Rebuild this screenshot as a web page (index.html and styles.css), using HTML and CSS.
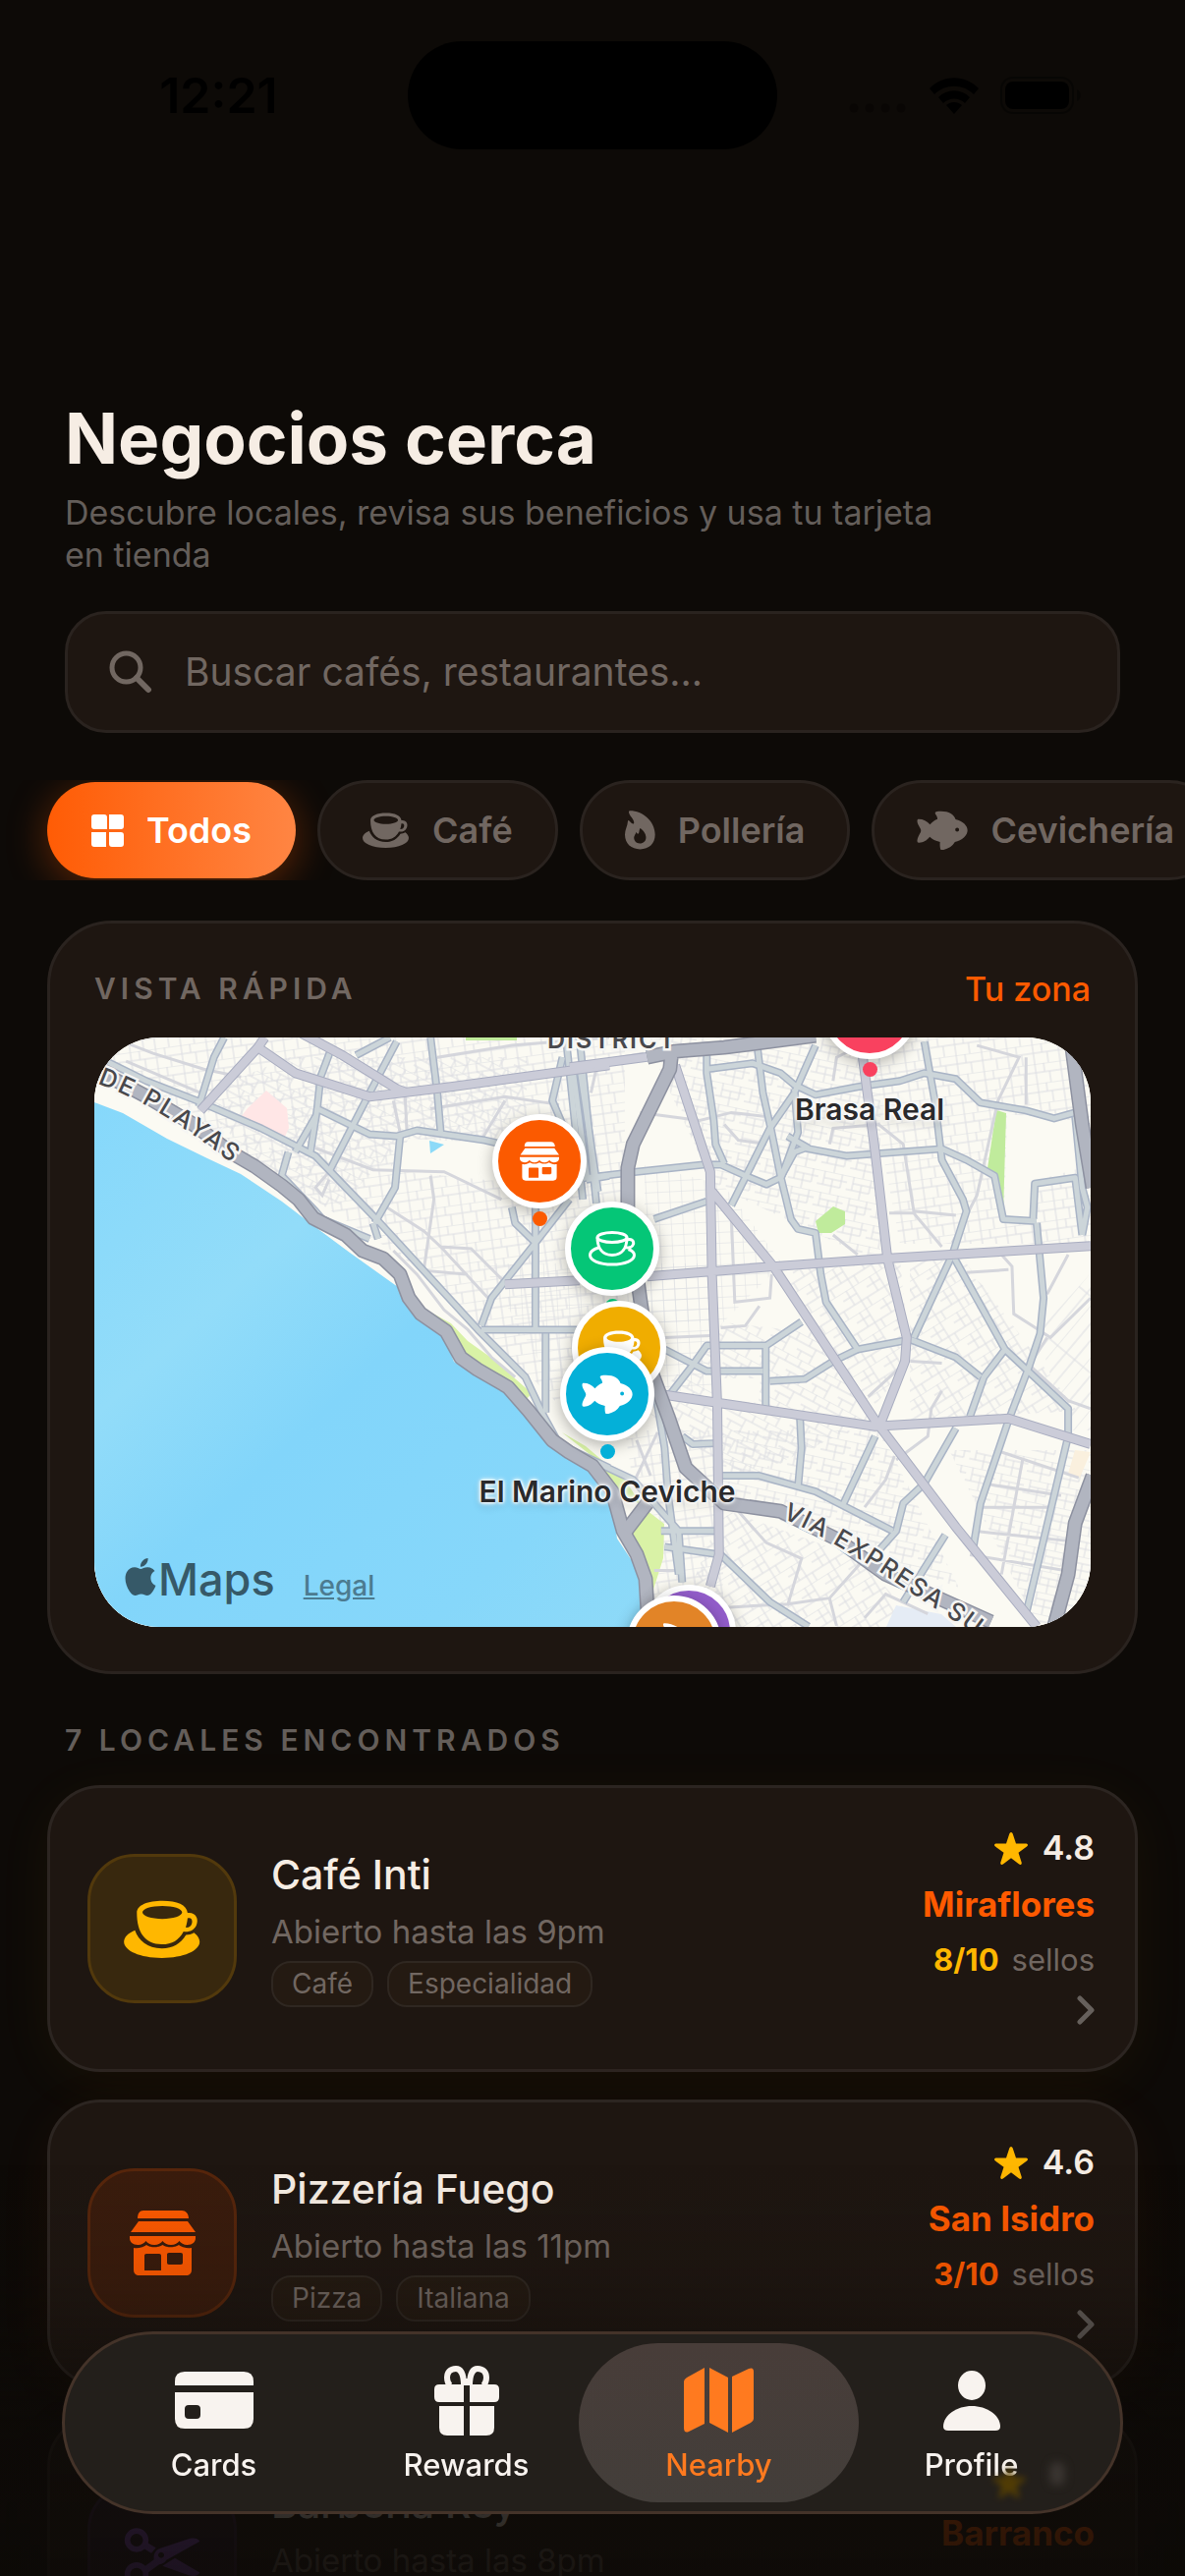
FILE: index.html
```html
<!DOCTYPE html>
<html lang="es">
<head>
    <meta charset="UTF-8">
    <meta name="viewport" content="width=device-width, initial-scale=1.0">
    <title>Negocios cerca</title>
    <link rel="stylesheet" href="styles.css">
</head>
<body>
    <!-- Icon sprite -->
    <svg class="sprite" aria-hidden="true">
        <symbol id="i-cup" viewBox="0 0 48 36">
            <path fill-rule="evenodd" d="M8 8C8 3 15 .5 24 .5S39 3 39.5 8c5.500-.5 7 4 5.500 7.500-1.500 3.500-5 4.500-8 4-3 5.500-7 8-13.500 8C13 27.500 8 20 8 8zm3.500-.3c0 2.300 5.500 4 12.300 4s12.300-1.700 12.300-4-5.500-4-12.300-4-12.300 1.700-12.300 4zM39.500 11.300c-.2 2-.6 4-1.200 5.700 2 .2 3.600-.8 4-3 .3-2-.8-3.300-2.800-2.700z"/>
            <path d="M6.800 18.800C2.500 20.500 0 23.300 0 26c0 5.500 10 10 23.500 10S47 31.500 47 26c0-2-1.500-4.300-3.500-5.700-1.500.8-3.500 1.400-5 1.400-3.500 5.500-8 8.300-15 8.300-9 0-14.500-5-16.700-11.200z"/>
        </symbol>
        <symbol id="i-cup-line" viewBox="0 0 48 36">
            <g fill="none" stroke="currentColor" stroke-width="3">
                <ellipse cx="24" cy="6.500" rx="15" ry="5"/>
                <path d="M9 6.500c0 11 5 18 15 18s15-7 15-18M38.500 9c5-1.500 8 .5 7 4.500-.8 3-4.500 4-8.500 3"/>
                <path d="M10 17c-5 1.500-8.500 4-8.500 7.500C1.500 30 11 34 24 34s22.500-4 22.500-9.500c0-2.500-2-4.500-6-6"/>
            </g>
        </symbol>
        <symbol id="i-store" viewBox="0 0 67 66">
            <path d="M8 8C8 3 10 0 14 0h39c4 0 7 3 7 8zM9 11h50l8 11H1zM0 26h67v2c0 4-3 7-8.500 7-3.500 0-6.500-2-8-4-1.500 2-4.500 4-8.500 4s-7-2-8.500-4c-1.500 2-4.500 4-8.500 4s-7-2-8.500-4c-1.500 2-4.500 4-8 4C3 35 0 32 0 28z"/>
            <path fill-rule="evenodd" d="M4 38c6 1 10-1 13-3 4 3 12 3 16.500 0 4 3 12 3 16.500 0 3 2 7 4 13 3v22c0 4-2 6-6 6H10c-4 0-6-2-6-6zm13 6c-1.300 0-2 .7-2 2v15h17V46c0-1.300-.7-2-2-2zm23-1c-1.300 0-2 .7-2 2v8c0 1.300.7 2 2 2h12c1.300 0 2-.7 2-2v-8c0-1.300-.7-2-2-2z"/>
        </symbol>
        <symbol id="i-fish" viewBox="30 46 158 124">
            <path fill-rule="evenodd" d="M36 72c-6 0-6 8 0 20 5 9 7 12 7 16s-3 8-7 16c-6 12-6 21 0 21 12 1 26-7 34-18 8 7 18 13 32 16-1 9 0 17 1 21s5 4 10 3c15-3 27-11 35-24 22-5 39-21 39-36s-15-29-37-34c-4-15-22-26-48-25-14 0-17 4-14 9 4 6 6 10 6 15-10 4-18 10-23 17-9-11-21-17-35-17zm119 27a6 6 0 1 1 0 12 6 6 0 0 1 0-12z"/>
        </symbol>
        <symbol id="i-flame" viewBox="56 44 94 120">
            <path fill-rule="evenodd" d="M72 44c38 0 77 32 77 74 0 28-19 45-46 45s-47-17-47-45c0-15 8-26 9-41 0-4 3-4 5-1 6 6 12 12 14 6 2-10-16-24-16-34 0-3 2-4 4-4zm31 54c-4 6-2 16-6 17-3 0-5-2-6-6-2 8-7 11-7 18 0 10 7 18 18 18s19-7 19-19c0-11-9-22-18-28z"/>
        </symbol>
        <symbol id="i-grid" viewBox="0 0 33 33">
            <path d="M3 0h10q3 0 3 3v12H3q-3 0-3-3V3q0-3 3-3zM18 0h12q3 0 3 3v9q0 3-3 3H18zM0 18h15v15H3q-3 0-3-3zM18 18h12q3 0 3 3v9q0 3-3 3H21q-3 0-3-3z"/>
        </symbol>
        <symbol id="i-search" viewBox="0 0 44 44">
            <circle cx="17.500" cy="17.500" r="14.500" fill="none" stroke="currentColor" stroke-width="5"/>
            <path d="M28 28l12 12" fill="none" stroke="currentColor" stroke-width="6" stroke-linecap="round"/>
        </symbol>
        <symbol id="i-star" viewBox="0 0 34 33">
            <path d="M17 0q1.200 0 1.700 1.500l3.300 10 10.500.1q1.500.2 1.500 1.400 0 .8-1 1.500l-8.500 6.200 3.200 10.100q.3 1.300-.6 1.900-.8.500-1.900-.3L17 26.200l-8.200 6.200q-1.100.8-1.900.3-.9-.6-.6-1.900l3.200-10.100L1 14.500q-1-.7-1-1.500 0-1.200 1.500-1.400l10.500-.1 3.300-10Q15.800 0 17 0z"/>
        </symbol>
        <symbol id="i-chevron" viewBox="0 0 18 30">
            <path d="M3 3l12 12L3 27" fill="none" stroke="currentColor" stroke-width="5" stroke-linecap="round" stroke-linejoin="round"/>
        </symbol>
        <symbol id="i-scissors" viewBox="18 6 234 182">
            <g fill="none" stroke="currentColor" stroke-width="17">
                <circle cx="57" cy="43" r="28"/>
                <circle cx="57" cy="147" r="28"/>
            </g>
            <path fill-rule="evenodd" d="M76 128l34-26c-2-16 4-28 20-34l90-30c14-3 26 0 30 9L148 104c-4 8-12 12-22 13l-38 28zM132 80a9 9 0 1 0 .1 0zM88 50l28 16-14 17-24-15zM136 122l38-24 76 44c-4 10-18 13-34 8z"/>
        </symbol>
        <symbol id="i-card" viewBox="0 0 80 58">
            <path fill-rule="evenodd" d="M0 14V10Q0 0 10 0h60q10 0 10 10v4zM0 21h80v27q0 10-10 10H10Q0 58 0 48zm14 13q-4 0-4 4v6q0 4 4 4h8q4 0 4-4v-6q0-4-4-4z"/>
        </symbol>
        <symbol id="i-gift" viewBox="0 0 66 71">
            <g fill="none" stroke="currentColor" stroke-width="6">
                <path d="M30 20C30 9 27 3 22 3c-6 0-9 4-9 9 0 3 1 6 3 8M36 20C36 9 39 3 44 3c6 0 9 4 9 9 0 3-1 6-3 8"/>
                <path d="M33 20v-7" stroke-width="5"/>
            </g>
            <path d="M5 19h25v18H5q-5 0-5-5v-8q0-5 5-5zM36 19h25q5 0 5 5v8q0 5-5 5H36zM5 41h25v30H13q-8 0-8-8zM36 41h25v22q0 8-8 8H36z"/>
        </symbol>
        <symbol id="i-map" viewBox="0 0 71 66">
            <path d="M3 10L21 0v57L5 65q-5 2-5-4V14q0-2 3-4zM26 0l19 10v56L26 56zM49 9L66 1q5-2 5 3v48q0 2-3 4L49 66z"/>
        </symbol>
        <symbol id="i-person" viewBox="0 0 58 61">
            <ellipse cx="29" cy="15" rx="14" ry="15"/>
            <path d="M5 61q-5 0-5-4c0-12 14-21 29-21s29 9 29 21q0 4-5 4z"/>
        </symbol>
        <symbol id="i-apple" viewBox="2 0 20 24">
            <path d="M12.152 6.896c-.948 0-2.415-1.078-3.960-1.040-2.040.027-3.910 1.183-4.961 3.014-2.117 3.675-.546 9.103 1.519 12.090 1.013 1.454 2.208 3.090 3.792 3.039 1.520-.065 2.090-.987 3.935-.987 1.831 0 2.350.987 3.960.948 1.637-.026 2.676-1.480 3.676-2.948 1.156-1.688 1.636-3.325 1.662-3.415-.039-.013-3.182-1.221-3.220-4.857-.026-3.040 2.480-4.494 2.597-4.559-1.429-2.090-3.623-2.324-4.390-2.376-2-.156-3.675 1.090-4.610 1.090zM15.530 3.830c.843-1.012 1.400-2.427 1.245-3.830-1.207.052-2.662.805-3.532 1.818-.78.896-1.454 2.338-1.273 3.714 1.338.104 2.715-.688 3.559-1.701"/>
        </symbol>
    </svg>

    <div class="screen">
        <div class="status-bar">
            <span class="time">12:21</span>
            <span class="island"></span>
            <span class="status-icons">
                <svg width="60" height="10" viewBox="0 0 60 10" opacity="0.3"><circle cx="5" cy="5" r="4.500"/><circle cx="21" cy="5" r="4.500"/><circle cx="37" cy="5" r="4.500"/><circle cx="53" cy="5" r="4.500"/></svg>
                <svg width="50" height="37" viewBox="0 0 50 37">
                    <path d="M0 11C14-3.500 36-3.500 50 11l-5 6C34 6 16 6 5 17zM9 20c9-9 23-9 32 0l-5 6c-6-6-16-6-22 0zM17 28c5-4 11-4 16 0l-8 9z"/>
                </svg>
                <svg width="83" height="38" viewBox="0 0 83 38">
                    <rect x="1" y="1" width="73" height="36" rx="12" fill="none" stroke="#000" stroke-opacity="0.4" stroke-width="2"/>
                    <rect x="5" y="5" width="65" height="28" rx="8"/>
                    <path d="M78 13c5 2 5 10 0 12z" opacity="0.4"/>
                </svg>
            </span>
        </div>

        <header class="intro">
            <h1>Negocios cerca</h1>
            <p>Descubre locales, revisa sus beneficios y usa tu tarjeta en tienda</p>
            <label class="search">
                <svg class="icon-search"><use href="#i-search"/></svg>
                <input type="text" placeholder="Buscar cafés, restaurantes..." aria-label="Buscar">
            </label>
        </header>

        <div class="chips">
            <button class="chip active"><svg class="icon-grid"><use href="#i-grid"/></svg>Todos</button>
            <button class="chip"><svg class="icon-cup"><use href="#i-cup"/></svg>Café</button>
            <button class="chip"><svg class="icon-flame"><use href="#i-flame"/></svg>Pollería</button>
            <button class="chip"><svg class="icon-fish"><use href="#i-fish"/></svg>Cevichería</button>
        </div>

        <section class="map-card">
            <div class="map-head">
                <h2>Vista rápida</h2>
                <a href="#zona">Tu zona</a>
            </div>
            <div class="map">
                <svg class="map-drawing" viewBox="0 0 1014 600" preserveAspectRatio="xMidYMid slice" aria-hidden="true">
                    <defs>
                        <linearGradient id="sea" x1="0" y1="0" x2="1" y2="1">
                            <stop offset="0" stop-color="#86d8fb"/>
                            <stop offset="0.3" stop-color="#92dcf9"/>
                            <stop offset="0.5" stop-color="#82d5fa"/>
                            <stop offset="0.8" stop-color="#86d7fa"/>
                            <stop offset="1" stop-color="#8edaf8"/>
                        </linearGradient>
                        <pattern id="st-a" width="26" height="20" patternUnits="userSpaceOnUse" patternTransform="rotate(-8)"><path class="lane" d="M0 0H26M0 9H26M8 0V20M17 0V9M22 9V20"/></pattern>
                        <pattern id="st-b" width="30" height="24" patternUnits="userSpaceOnUse" patternTransform="rotate(28)"><path class="lane" d="M0 0H30M0 8H30M0 16H18M10 0V8M18 8V24M25 0V8M5 16V24"/></pattern>
                        <pattern id="st-c" width="12" height="11" patternUnits="userSpaceOnUse" patternTransform="rotate(-3)"><path class="lane" d="M0 0H12M0 0V11"/></pattern>
                        <pattern id="st-d" width="28" height="26" patternUnits="userSpaceOnUse" patternTransform="rotate(-32)"><path class="lane" d="M0 0H28M0 8H16M0 17H28M8 0V17M16 0V26M23 17V26"/></pattern>
                        <pattern id="st-e" width="30" height="22" patternUnits="userSpaceOnUse" patternTransform="rotate(12)"><path class="lane" d="M0 0H30M6 7H30M0 14H24M6 0V14M15 7V22M24 0V14"/></pattern>
                        <pattern id="st-f" width="34" height="60" patternUnits="userSpaceOnUse" patternTransform="rotate(40)"><path class="lane" d="M0 0V60M12 0V60M23 0V60M0 30H34"/></pattern>

                        <g id="secondary">
                            <g transform="translate(-16 -16) scale(.3444 .4018)">
                                <path d="M46 85L200 150 350 200 540 270 700 340 880 500 1180 780 1320 900 1375 1000 1420 1070 1568 1130"/>
                                <path d="M430 40L400 90 355 215M750 60L715 140 705 220 685 330M705 220L860 285 940 290 1000 275 1200 300 1250 310"/>
                                <path d="M940 50L860 180 740 380M950 290L935 420 875 510M1040 40L1060 180 1070 280M920 40L820 85M1430 90L1400 200 1500 400"/>
                                <path d="M1440 40L1490 450M1480 40L1530 460M1350 470V780M1380 790L1380 990M1190 780H1480M1190 770L1220 700 1350 560 1450 450M1280 470L1290 510 1350 560M620 330L600 390 700 480 720 500 860 550M700 240L640 330"/>
                                <path d="M1500 400L1568 390M870 510L885 550"/>
                            </g>
                            <g transform="translate(484 -16) scale(.3571 .4018)">
                                <path d="M0 400L190 380 380 362 430 362 500 390 560 412 600 395 640 330 670 320 790 340 1060 322 1130 350 1210 390 1235 500 1330 505M10 130L50 400M30 130L80 430M390 80V130L410 250 415 310 440 360M390 120L520 105 600 130 640 160 700 185 820 165 940 150 1010 130 1100 145 1170 205 1300 225 1380 245 1440 230"/>
                                <path d="M535 70L550 180 575 280 600 390 630 500 650 525 700 535 715 640 730 710 820 830 970 805 1100 850 1170 900M700 60L640 180 570 270 460 465M640 170L650 280 600 400M620 290L680 320M1010 50L1040 200 1060 350 1120 450 1130 480 1090 590 980 800M240 500L390 455"/>
                                <path d="M1090 590L1240 830 1420 980V1050L1380 1200 1300 1500M1240 830L1180 900 1140 1000M1330 510L1350 700 1340 790 1310 870 1250 1010 1170 1220 1150 1330M1320 500L1325 410 1440 395 1460 540M1440 240L1460 420 1475 470 1460 540"/>
                                <path d="M280 950L350 870 390 820H560L660 760M270 830L390 885H550M558 820V980M570 910L670 905 750 860 820 830M655 990L660 1080 650 1180M320 1050L350 1070 410 1068M430 1150H540L700 1190 920 1290M870 1050L780 1220M1100 1030L1010 1170 950 1220 930 1290 880 1340M430 1350L570 1470 680 1532M260 1290H430M270 1330L430 1350M1070 1300L950 1470M240 920L270 1080 280 1200 310 1400M60 1110L180 1160 310 1290 320 1420"/>
                            </g>
                        </g>
                        <g id="major">
                            <g transform="translate(-16 -16) scale(.3444 .4018)">
                                <path d="M360 225L530 65 640 130 860 190 1100 165 1568 110M550 40L530 65M660 30L780 85 940 170 970 180M1260 665L1480 655"/>
                            </g>
                            <g transform="translate(484 -16) scale(.3571 .4018)">
                                <path d="M0 115L230 88M220 645L580 620 900 600 1484 568M300 110L400 380 405 640 420 970 425 1350 400 1430M405 430L580 620 870 1010 1100 1280 1330 1532M830 60L870 330 905 600 960 800 955 860 880 1030M270 945L420 965 870 1025 1250 1005 1484 1070"/>
                            </g>
                        </g>
                        <g id="highway">
                            <path d="M0 32L53 60 100 88 139 117 163 131 191 151 208 165 223 184 256 201 273 217 294 225 311 241 320 265 332 281 358 299 373 326 390 338 421 356 442 380 466 410 483 422 507 436 527 462 538 502 552 526 561 551 564 600"/>
                            <g transform="translate(484 -16) scale(.3571 .4018)">
                                <path d="M220 90L300 75 440 65 700 35M290 80L285 120 180 310 165 370V470L200 700 230 880 280 1000 330 1130 440 1220 600 1240 760 1310 900 1400 1200 1520M160 1290L220 1220M1430 60L1460 260 1490 420M1490 1150L1440 1270 1420 1400 1380 1532"/>
                            </g>
                        </g>
                        <path id="playas" d="M3 47C50 64 92 90 155 140"/>
                        <path id="expresa" d="M700 489C760 515 810 552 857 582S890 604 930 640"/>
                    </defs>

                    <rect class="land" width="1014" height="600"/>
                    <!-- local streets, one hatch per district -->
                    <rect fill="url(#st-a)" width="540" height="400"/>
                    <path fill="url(#st-b)" d="M200 20H440V110H310L230 190 100 60z"/>
                    <path class="land" d="M320 103L420 108 450 150 300 135z"/>
                    <path class="land" d="M0 40L140 110 330 235 500 400V600H0z"/>
                    <path fill="url(#st-c)" d="M395 230H640V360H470z"/>
                    <path class="land" d="M628 60H1014V600H570L540 420 628 360z"/>
                    <path fill="url(#st-e)" d="M560 0H800V230L630 150z"/>
                    <path fill="url(#st-a)" d="M780 0H1014V210H820z"/>
                    <path fill="url(#st-c)" d="M560 130L640 150 700 230 640 290H560z"/>
                    <path fill="url(#st-d)" d="M695 232L820 225 830 330 790 380z"/>
                    <path fill="url(#st-b)" d="M640 290L730 300 790 390 660 450 560 380z"/>
                    <path fill="url(#st-e)" d="M640 400H800L880 560 640 470z"/>
                    <path fill="url(#st-d)" d="M830 230L880 220 1000 380 830 390z"/>
                    <path fill="url(#st-f)" d="M960 300L1014 240V400H990z"/>
                    <path fill="url(#st-e)" d="M870 420H1014V600H960z"/>
                    <path fill="url(#st-d)" d="M640 480L780 530 840 600H590z"/>
                    <path fill="url(#st-a)" d="M540 400H640V600H570z"/>

                    <path class="water" d="M0 66L29 77 74 103 115 123 149 139 191 167 225 193 260 219 309 254 320 275 332 289 356 305 366 330 384 342 414 358 435 380 459 412 476 424 505 436 520 450 527 478 532 510 548 534 555 555 560 579 568 600H0z"/>
                    <path class="park" d="M332 274L363 291 380 309 404 326 445 362 440 368 418 352 395 340 376 330 368 305zM476 402L500 416 540 450 558 478 580 495 579 530 568 565 560 540 546 508 560 478 530 460 505 425z"/>
                    <path class="park-dark" d="M378 0H430V3H378zM734 187L752 172 764 177V190L750 199H737zM918 74L928 77 925 181 921 145 909 133z"/>
                    <path class="clinic" d="M145 86L156 72 175 54 196 72 198 92 192 105z"/>
                    <path class="clear" d="M929 78L996 84 1000 134 957 146V186L926 180z"/>
                    <path class="clear" d="M889 240L932 237 934 275zM636 347L678 347 676 372 638 368z"/>
                    <path class="sand" d="M998 420L1014 422 1003 448 991 444z"/>
                    <path class="campus" d="M806 600L816 578 862 587 877 600z"/>
                    <path class="water-flat" d="M341 105L356 109 342 118z"/>

                    <!-- minor roads -->
                    <g class="minor">
                        <g transform="translate(-16 -16) scale(.3444 .4018)">
                            <path d="M130 50L220 80 370 120 480 140M140 100L360 180M1060 90L1280 60 1568 40M1040 220L1260 190 1420 210M930 200L950 280M965 190L970 280M1260 200L1190 300M700 320L870 375 1080 380 1250 450M1040 390L1050 450 1020 630 1150 640M910 470L1020 530 1070 570 1160 575 1260 660M1070 570L1210 700M930 580L1000 640 1080 730 1150 780 1220 850 1290 900M740 380L700 420 720 440 740 400"/>
                        </g>
                        <g transform="translate(484 -16) scale(.3571 .4018)">
                            <path d="M60 180L80 100 210 80M200 230L370 250 460 230 560 240M440 260L480 300 560 310M750 150L760 90 830 60M1160 60L1280 90 1220 200 1160 440 1090 560M1300 90V210M740 310L750 270 880 260 950 310 980 480 1100 490M910 485H980L1060 570M460 490L470 710 570 700 575 640M430 775L500 770 540 720M270 800L400 795M750 540L820 590M960 860L850 950M970 860L1060 865M930 1110L1020 1050 1030 980 1060 935M925 1100L900 1160 840 1230M1230 590L1260 620 1265 740 1370 800 1484 700M1130 635L1250 628M1310 870L1420 960 1484 980M1420 590L1360 690M1360 800L1310 870M1230 1090L1450 1155M1290 1110L1230 1400M1180 1170L1400 1200M1170 1230H1380M1150 1290L1420 1315M1140 1350L1410 1390M480 1240L560 1320 660 1360 620 1480M420 1485L620 1475 740 1460 760 1530M740 1460L840 1360M840 1510L900 1450 1020 1500M190 1060L230 1150M180 1170L250 1040M240 1390H320"/>
                        </g>
                    </g>

                    <use href="#secondary" class="road secondary-case"/>
                    <use href="#secondary" class="road secondary"/>
                    <use href="#major" class="road major-case"/>
                    <use href="#major" class="road major"/>
                    <use href="#highway" class="road highway-case"/>
                    <use href="#highway" class="road highway"/>

                    <g class="road-names">
                        <text class="wide"><textPath href="#playas">DE PLAYAS</textPath></text>
                        <text><textPath href="#expresa">VIA EXPRESA SU</textPath></text>
                        <text class="area" x="461" y="11">DISTRICT</text>
                    </g>
                </svg>

                <div class="pin pin-orange"><span class="bubble"><svg class="pin-store"><use href="#i-store"/></svg></span><i></i></div>
                <div class="pin pin-green"><span class="bubble"><svg class="pin-cup"><use href="#i-cup-line"/></svg></span><i></i></div>
                <div class="pin pin-yellow"><span class="bubble"><svg class="pin-cup"><use href="#i-cup"/></svg></span><i></i></div>
                <div class="pin pin-cyan"><span class="bubble"><svg class="pin-fish"><use href="#i-fish"/></svg></span><i></i><b>El Marino Ceviche</b></div>
                <div class="pin pin-red"><span class="bubble"></span><i></i><b>Brasa Real</b></div>
                <div class="pin pin-purple"><span class="bubble"></span><i></i></div>
                <div class="pin pin-brown"><span class="bubble"><svg class="pin-flame"><use href="#i-flame"/></svg></span><i></i></div>

                <div class="map-legal">
                    <span class="brand"><svg><use href="#i-apple"/></svg>Maps</span>
                    <a href="#legal">Legal</a>
                </div>
            </div>
        </section>

        <h2 class="count">7 locales encontrados</h2>

        <div class="list">
            <article class="place gold">
                <span class="tile"><svg class="tile-cup"><use href="#i-cup"/></svg></span>
                <div class="info">
                    <h3>Café Inti</h3>
                    <p>Abierto hasta las 9pm</p>
                    <div class="tags"><span>Café</span><span>Especialidad</span></div>
                </div>
                <div class="meta">
                    <span class="rating"><svg><use href="#i-star"/></svg>4.8</span>
                    <span class="district">Miraflores</span>
                    <span class="stamps"><b>8/10</b>sellos</span>
                    <svg class="chevron"><use href="#i-chevron"/></svg>
                </div>
            </article>

            <article class="place orange">
                <span class="tile"><svg class="tile-store"><use href="#i-store"/></svg></span>
                <div class="info">
                    <h3>Pizzería Fuego</h3>
                    <p>Abierto hasta las 11pm</p>
                    <div class="tags"><span>Pizza</span><span>Italiana</span></div>
                </div>
                <div class="meta">
                    <span class="rating"><svg><use href="#i-star"/></svg>4.6</span>
                    <span class="district">San Isidro</span>
                    <span class="stamps"><b>3/10</b>sellos</span>
                    <svg class="chevron"><use href="#i-chevron"/></svg>
                </div>
            </article>

            <article class="place purple">
                <span class="tile"><svg class="tile-scissors"><use href="#i-scissors"/></svg></span>
                <div class="info">
                    <h3>Barbería Rey</h3>
                    <p>Abierto hasta las 8pm</p>
                    <div class="tags"></div>
                </div>
                <div class="meta">
                    <span class="rating"><svg><use href="#i-star"/></svg></span>
                    <span class="district">Barranco</span>
                    <span class="stamps"></span>
                    <svg class="chevron"><use href="#i-chevron"/></svg>
                </div>
            </article>
        </div>
    </div>

    <div class="fade"></div>

    <nav class="tab-bar">
        <a href="#cards"><svg class="tab-card"><use href="#i-card"/></svg>Cards</a>
        <a href="#rewards"><svg class="tab-gift"><use href="#i-gift"/></svg>Rewards</a>
        <a href="#nearby" class="active" aria-current="page"><svg class="tab-map"><use href="#i-map"/></svg>Nearby</a>
        <a href="#profile"><svg class="tab-person"><use href="#i-person"/></svg>Profile</a>
        <svg class="glow-star"><use href="#i-star"/></svg>
        <span class="glow-dot"></span>
    </nav>
</body>
</html>
```

FILE: styles.css
```css
* {
    box-sizing: border-box;
}
body {
    margin: 0;
    font-family: Inter, "Liberation Sans", sans-serif;
    background-color: #0d0a07;
    color: #f6ede4;
}
h1, h2, h3, p {
    margin: 0;
}
a {
    color: inherit;
    text-decoration: none;
}
svg {
    display: block;
    flex: none;
    fill: currentColor;
}
.sprite {
    position: absolute;
    width: 0;
    height: 0;
}
.screen {
    height: 100vh;
    overflow-y: auto;
    scrollbar-width: none;
}

/* status bar */
.status-bar {
    display: grid;
    grid-template-columns: 1fr 376px 1fr;
    align-items: center;
    height: 194px;
    color: #000;
}
.time {
    padding-left: 30px;
    text-align: center;
    font-size: 50px;
    font-weight: 600;
}
.island {
    height: 110px;
    border-radius: 55px;
    background: #000;
}
.status-icons {
    display: flex;
    align-items: center;
    justify-content: flex-end;
    gap: 22px;
    padding-right: 105px;
}
.status-icons svg:first-child {
    margin-top: 26px;
}

/* heading and search */
.intro {
    padding: 210px 66px 0;
}
h1 {
    font-size: 71px;
    font-weight: 700;
    line-height: 84px;
}
.intro p {
    max-width: 930px;
    margin: 12px 0 36px;
    font-size: 34px;
    line-height: 43px;
    color: #645e5a;
}
.search {
    display: flex;
    align-items: center;
    gap: 33px;
    height: 124px;
    padding: 0 42px;
    border: 3px solid #2a231f;
    border-radius: 42px;
    background: #1e1611;
    color: #716761;
}
.search input {
    flex: 1;
    min-width: 0;
    padding: 0;
    border: 0;
    outline: 0;
    background: none;
    color: inherit;
    font: 400 39px/50px Inter, "Liberation Sans", sans-serif;
}
.search input::placeholder {
    color: #716761;
    opacity: 1;
}
.icon-search {
    width: 44px;
    height: 44px;
}

/* category chips */
.chips {
    display: flex;
    gap: 22px;
    margin-top: 48px;
    padding: 0 48px;
    overflow: hidden;
}
.chip {
    display: flex;
    flex: none;
    align-items: center;
    gap: 23px;
    height: 102px;
    padding: 0 43px;
    border: 3px solid #2a231f;
    border-radius: 51px;
    background: #1e1611;
    color: #716761;
    font: 600 36px/42px Inter, "Liberation Sans", sans-serif;
}
.chip.active {
    border: 0;
    height: 98px;
    align-self: center;
    padding: 0 45px;
    background: linear-gradient(90deg, #ff5c05, #ff8543);
    box-shadow: 0 8px 40px rgba(255, 92, 5, 0.35);
    color: #fff;
}
.icon-grid { width: 33px; height: 33px; }
.icon-cup { width: 48px; height: 36px; }
.icon-flame { width: 31px; height: 40px; }
.icon-fish { width: 52px; height: 41px; }

/* map card */
.map-card {
    margin: 41px 48px 0;
    padding: 45px 45px;
    border: 3px solid #2a231f;
    border-radius: 66px;
    background: #1e1611;
}
.map-head {
    display: flex;
    align-items: center;
    justify-content: space-between;
    height: 42px;
    margin-bottom: 29px;
}
h2 {
    font-size: 30px;
    font-weight: 600;
    line-height: 42px;
    letter-spacing: 5px;
    text-transform: uppercase;
    color: #716761;
}
.map-head a {
    font-size: 34px;
    font-weight: 500;
    color: #ff5a00;
}
.map {
    position: relative;
    height: 600px;
    border-radius: 66px;
    overflow: hidden;
    background: #fbfaf3;
}
.map-drawing {
    width: 100%;
    height: 100%;
}
.land, .clear { fill: #fbfaf3; }
.water { fill: url(#sea); }
.water-flat { fill: #8cdaf8; }
.park { fill: #d9f2a6; }
.park-dark { fill: #c0eb9c; }
.clinic { fill: #ffe6e6; }
.sand { fill: #faf0de; }
.campus { fill: #e5ecf5; }
.lane {
    fill: none;
    stroke: #dcdde2;
    stroke-width: 1;
}
.minor path, .road path, #secondary path, #major path, #highway path {
    fill: none;
    vector-effect: non-scaling-stroke;
}
.minor {
    stroke: #d5d6dc;
    stroke-width: 3;
}
.road {
    stroke-linejoin: round;
}
.secondary-case { stroke: #a9b4c6; stroke-width: 8; }
.secondary { stroke: #ccd5d9; stroke-width: 5; }
.major-case { stroke: #a9adc0; stroke-width: 10; }
.major { stroke: #cbccd8; stroke-width: 8; }
.highway-case { stroke: #8d91a0; stroke-width: 15; }
.highway { stroke: #b1b5c0; stroke-width: 12; }
.road-names {
    font-size: 25px;
    font-weight: 500;
    letter-spacing: 2px;
    fill: #48484c;
    stroke: #f6f6f4;
    stroke-width: 5;
    paint-order: stroke;
}
.road-names .wide {
    letter-spacing: 3px;
}
.road-names .area {
    font-weight: 600;
}

/* pins: each one is placed by its dot */
.pin {
    position: absolute;
    display: flex;
    flex-direction: column;
    align-items: center;
    width: 300px;
    margin-left: -150px;
    color: #fff;
}
.bubble {
    display: flex;
    align-items: center;
    justify-content: center;
    width: 96px;
    height: 96px;
    border: 6px solid #fff;
    border-radius: 50%;
    background: var(--pin);
    box-shadow: 0 4px 16px rgba(0, 0, 0, 0.3);
}
.pin i {
    width: 15px;
    height: 15px;
    margin-top: 3px;
    border-radius: 50%;
    background: var(--pin);
}
.pin b {
    margin-top: 15px;
    font-size: 30px;
    font-weight: 600;
    line-height: 36px;
    white-space: nowrap;
    color: #2a2a2c;
    text-shadow: 0 0 3px #fff, 0 0 3px #fff, 0 0 4px #fff, 0 0 6px #fff, 0 4px 10px rgba(0, 0, 0, 0.2);
}
.pin-orange { left: 453px; top: 78px; --pin: #fb5a00; }
.pin-green { left: 527px; top: 167px; --pin: #05c677; }
.pin-yellow { left: 534px; top: 268px; --pin: #f0ad00; }
.pin-cyan { left: 522px; top: 315px; --pin: #04b0d8; }
.pin-red { left: 789px; top: -74px; --pin: #f9415f; }
.pin-purple { left: 605px; top: 557px; --pin: #935dcb; }
.pin-brown { left: 590px; top: 568px; --pin: #e28427; }
.pin-store { width: 40px; height: 40px; }
.pin-cup { width: 48px; height: 36px; }
.pin-fish { width: 52px; height: 41px; }
.pin-flame { width: 31px; height: 40px; }
.map-legal {
    position: absolute;
    left: 31px;
    bottom: 18px;
    display: flex;
    align-items: baseline;
    gap: 29px;
    color: #365968;
}
.brand {
    display: flex;
    align-items: center;
    gap: 2px;
    font-size: 45px;
    font-weight: 500;
    line-height: 60px;
}
.brand svg {
    width: 32px;
    height: 38px;
    margin-bottom: 6px;
}
.map-legal a {
    font-size: 28px;
    font-weight: 500;
    color: #4c7b90;
    text-decoration: underline;
}

/* places */
.count {
    margin: 46px 66px 25px;
    color: #645e5a;
}
.list {
    display: flex;
    flex-direction: column;
    gap: 28px;
    padding: 0 48px 60px;
}
.place {
    display: flex;
    align-items: center;
    gap: 35px;
    height: 292px;
    padding: 0 41px 0 38px;
    border: 3px solid #2c2521;
    border-radius: 54px;
    background: #1e1611;
    box-shadow: 0 10px 60px var(--glow);
}
.gold { --accent: #ffb700; --tile: #38280e; --edge: #52390c; --glow: rgba(255, 183, 0, 0.05); }
.orange { --accent: #ff5a00; --tile: #3a1c0d; --edge: #57260c; --glow: rgba(255, 90, 0, 0.05); }
.purple { --accent: #8b4fd0; --tile: #291b2b; --edge: #3b2547; --glow: rgba(139, 79, 208, 0.05); }
.tile {
    display: flex;
    flex: none;
    align-items: center;
    justify-content: center;
    width: 152px;
    height: 152px;
    border: 3px solid var(--edge);
    border-radius: 48px;
    background: var(--tile);
    color: var(--accent);
}
.tile-cup { width: 79px; height: 59px; }
.tile-store { width: 67px; height: 66px; }
.tile-scissors { width: 78px; height: 61px; }
.info {
    flex: 1;
    min-width: 0;
}
h3 {
    font-size: 41px;
    font-weight: 500;
    line-height: 50px;
}
.info p {
    margin-top: 12px;
    font-size: 33px;
    line-height: 42px;
    color: #716761;
}
.tags {
    display: flex;
    gap: 14px;
    height: 47px;
    margin-top: 9px;
}
.tags span {
    padding: 0 19px;
    border: 2px solid #2f2721;
    border-radius: 20px;
    background: #241a12;
    font-size: 28px;
    line-height: 42px;
    color: #716761;
}
.meta {
    display: flex;
    flex-direction: column;
    align-items: flex-end;
    gap: 15px;
    margin-bottom: 5px;
    line-height: 42px;
}
.rating {
    display: flex;
    align-items: center;
    gap: 15px;
    height: 42px;
    font-size: 34px;
    font-weight: 600;
}
.rating svg {
    width: 34px;
    height: 33px;
    color: #ffb700;
}
.district {
    font-size: 35px;
    font-weight: 700;
    color: #ff5a00;
}
.stamps {
    display: flex;
    gap: 13px;
    height: 42px;
    font-size: 31px;
    color: #716761;
}
.stamps b {
    color: var(--accent);
}
.chevron {
    width: 18px;
    height: 30px;
    color: #66605c;
}

/* bottom bar */
.fade {
    position: fixed;
    right: 0;
    bottom: 0;
    left: 0;
    height: 420px;
    background: linear-gradient(rgba(13, 10, 7, 0), rgba(13, 10, 7, 0.1) 28%, rgba(13, 10, 7, 0.3) 42%, rgba(13, 10, 7, 0.8) 66%, rgba(13, 10, 7, 0.88));
    pointer-events: none;
}
.tab-bar {
    position: fixed;
    right: 63px;
    bottom: 63px;
    left: 63px;
    display: grid;
    grid-template-columns: repeat(4, 1fr);
    height: 186px;
    padding: 9px 23px;
    border: 3px solid #443329;
    border-radius: 93px;
    background: #231f1b;
}
.tab-bar a {
    display: flex;
    flex-direction: column;
    align-items: center;
    justify-content: space-between;
    margin: 0 -14px;
    padding: 20px 0;
    border-radius: 81px;
    font-size: 31px;
    font-weight: 500;
    line-height: 36px;
    color: #f8f3ef;
}
.tab-bar a.active {
    background: linear-gradient(#483d39, #433e3a);
    color: #ff7a1f;
}
.tab-card { width: 80px; height: 58px; margin-top: 9px; }
.tab-gift { width: 66px; height: 71px; margin-top: 3px; }
.tab-map { width: 71px; height: 66px; margin-top: 5px; }
.tab-person { width: 58px; height: 61px; margin-top: 8px; }
.glow-star {
    position: absolute;
    right: 96px;
    bottom: 13px;
    width: 34px;
    height: 33px;
    color: #5c4300;
    filter: blur(3px);
    opacity: 0.8;
}
.glow-dot {
    position: absolute;
    right: 56px;
    bottom: 26px;
    width: 16px;
    height: 24px;
    border-radius: 8px;
    background: #3a3531;
    filter: blur(4px);
}
```
